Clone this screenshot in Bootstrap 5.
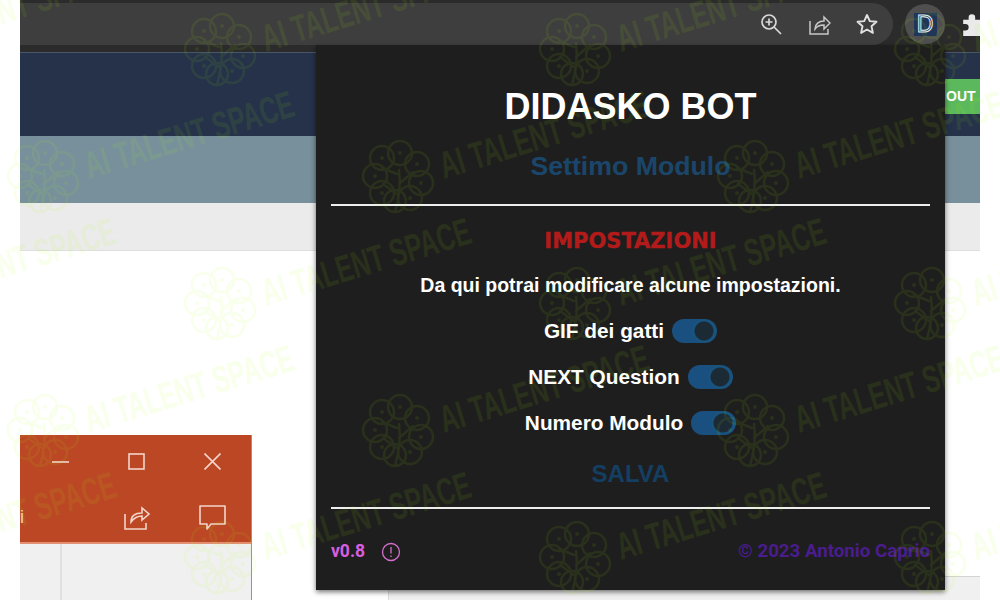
<!DOCTYPE html>
<html lang="en">
<head>
    <meta charset="UTF-8">
    <title>Didasko Bot</title>
    <link href="https://cdn.jsdelivr.net/npm/bootstrap@5.3.0/dist/css/bootstrap.min.css" rel="stylesheet">
    <style>
        html, body { height: 600px; overflow: hidden; background: #fff; }
        body { font-family: "Liberation Sans", Arial, sans-serif; }
        .stage { width: 1000px; height: 600px; padding: 0 20px; }
        .browser { height: 600px; }

        .tool-strip { height: 52px; background: #2b2b2b; padding: 3px 0 7px; overflow: hidden; }
        .addr-bar { width: 873px; height: 42px; background: #3e3e3e; border-radius: 0 21px 21px 0; padding-right: 14px; gap: 24px; flex-shrink: 0; }
        .addr-bar svg { width: 24px; height: 24px; }
        .ext-btn { width: 40px; height: 40px; border-radius: 50%; background: #4f4f4f; margin-left: 12px; flex-shrink: 0; }
        .ext-logo { width: 23px; height: 23px; background: #1f3658; }
        .ext-logo span { color: #1f3658; -webkit-text-stroke: 1px #e6edf5; font-size: 23px; font-weight: 400; line-height: 23px; }
        .puzzle { margin-left: 16px; flex-shrink: 0; }

        .site-head { height: 84px; background: #25324a; padding-top: 26px; border-top: 1px solid #4a5568; }
        .out-tag { width: 35px; height: 35px; background: #5cb85c; color: #fff; font-size: 14px; font-weight: 700; line-height: 35px; padding-left: 1px; overflow: hidden; }
        .site-band { height: 67px; background: #78909c; }
        .site-sub { height: 48px; background: #ebebeb; border-bottom: 1px solid #dedede; }
        .site-body { height: 349px; }
        .site-body-fill { height: 325px; }
        .site-foot { height: 24px; }
        .foot-blank { width: 368px; }
        .foot-grey { background: #f0f0f0; border-top: 1px solid #d4d4d4; border-left: 1px solid #ddd; }

        .office-win { position: absolute; left: 20px; top: 435px; width: 232px; height: 165px; background: #f0f0f0; border-right: 1px solid #dc7a5c; }
        .office-title { height: 109px; background: #bb4725; border-bottom: 2px solid #e28f72; }
        .office-row { height: 54px; }
        .office-row-a { gap: 59px; padding-right: 30px; }
        .office-row-b { gap: 48px; padding-right: 25px; padding-top: 4px; }
        .office-i { color: #f2cfc2; font-size: 18px; margin-right: auto; }
        .office-cols { width: 42px; height: 56px; border-right: 2px solid #e0e0e0; }

        .popup { position: absolute; left: 316px; top: 45px; width: 629px; height: 545px; background: #1e1e1e; color: #fff; padding: 0 15px; box-shadow: 0 2px 5px rgba(0,0,0,.55); }
        .popup h1 { font-size: 36px; font-weight: 700; line-height: 40px; margin: 42px 0 0; }
        .popup h2 { font-size: 26.7px; font-weight: 700; line-height: 30px; margin: 24px 0 0; color: #1b466b; }
        .rule-line { height: 2px; background: #eee; margin: 23px 0 0; opacity: 1; border: 0; }
        .popup h3 { font-family: "DejaVu Sans", sans-serif; font-size: 21px; font-weight: 700; line-height: 24px; margin: 23px 0 0; color: #b31b1b; -webkit-text-stroke: .4px #b31b1b; }
        .intro-txt { font-size: 19.5px; font-weight: 700; line-height: 24px; margin: 20px 0 0; }
        .opt-row { height: 46px; gap: 8px; font-size: 20.8px; font-weight: 700; }
        .opt-first { margin-top: 11px; }
        .opt-row .form-check-input { width: 45px; height: 24px; margin: 0; float: none; border-radius: 12px; background-color: #1a5080; border: 0; box-shadow: none; background-image: radial-gradient(circle at 32px 12px, #1c2a36 0 9px, #17557f 10px 11px, transparent 12px); }
        .save-txt { font-size: 24px; font-weight: 700; line-height: 28px; margin: 14px 0 0; color: #143f63; }
        .rule-b { margin-top: 19px; }
        .foot-row { margin-top: 25px; height: 35px; }
        .ver-txt { font-family: "Roboto", "Liberation Sans", sans-serif; font-size: 17.5px; font-weight: 700; color: #d75ee0; }
        .copy-txt { font-family: "Roboto", "Liberation Sans", sans-serif; font-size: 18.7px; font-weight: 700; color: #4a1c8e; }

        .mark-layer { position: absolute; left: 0; top: 0; width: 1000px; height: 600px; pointer-events: none; }
        .mark-layer text { font-family: "Liberation Sans Narrow", "Liberation Sans", sans-serif; font-size: 38px; font-weight: 700; fill: #aaff00; stroke: none; }
        .mark-lines { fill: none; stroke: #aaff00; stroke-width: 2.5; stroke-linecap: round; stroke-linejoin: round; }
        .mark-dots { fill: #aaff00; }
    </style>
</head>
<body>
    <div class="stage">
        <div class="browser d-flex flex-column">
            <div class="tool-strip d-flex align-items-center">
                <div class="addr-bar d-flex align-items-center justify-content-end">
                    <svg viewBox="0 0 24 24" fill="none" stroke="#d8d8d8" stroke-width="1.7"><circle cx="10" cy="10" r="7"/><path d="M15 15l7 7M10 6.500v7M6.500 10h7"/></svg>
                    <svg viewBox="0 0 24 24" fill="none" stroke="#c8c8c8" stroke-width="1.500"><path d="M3 9v13h18v-5M8 17c0-5 4-8 9-8V5l6 6-6 6v-4c-4 0-7 1-9 4z"/></svg>
                    <svg viewBox="0 0 24 24" fill="none" stroke="#e0e0e0" stroke-width="1.900" stroke-linejoin="round"><path d="M12 3l2.800 6.100 6.700.7-5 4.500 1.400 6.600L12 17.500l-5.900 3.400 1.400-6.600-5-4.500 6.700-.7z"/></svg>
                </div>
                <div class="ext-btn d-flex align-items-center justify-content-center">
                    <div class="ext-logo text-center"><span>D</span></div>
                </div>
                <svg class="puzzle" width="24" height="24" viewBox="0 0 22 22" fill="#eaeaea"><path d="M2 7h5V5a3 3 0 0 1 6 0v2h5v5h2a3 3 0 0 1 0 6h-2v4H2v-5h2a3 3 0 0 0 0-6H2z"/></svg>
            </div>
            <div class="site-head d-flex justify-content-end">
                <div class="out-tag">OUT</div>
            </div>
            <div class="site-band"></div>
            <div class="site-sub"></div>
            <div class="site-body d-flex flex-column">
                <div class="site-body-fill"></div>
                <div class="site-foot d-flex">
                    <div class="foot-blank"></div>
                    <div class="foot-grey flex-grow-1"></div>
                </div>
            </div>
        </div>
    </div>

    <div class="office-win">
        <div class="office-title d-flex flex-column">
            <div class="office-row office-row-a d-flex align-items-center justify-content-end">
                <svg width="17" height="17" viewBox="0 0 17 17" fill="none" stroke="#f3d5c9" stroke-width="1.600"><path d="M0 9h17"/></svg>
                <svg width="17" height="17" viewBox="0 0 17 17" fill="none" stroke="#f3d5c9" stroke-width="1.600"><rect x="1" y="1" width="15" height="15"/></svg>
                <svg width="17" height="17" viewBox="0 0 17 17" fill="none" stroke="#f3d5c9" stroke-width="1.600"><path d="M.5.5l16 16M16.500.5l-16 16"/></svg>
            </div>
            <div class="office-row office-row-b d-flex align-items-center justify-content-end">
                <span class="office-i">i</span>
                <svg width="28" height="25" viewBox="0 0 28 25" fill="none" stroke="#f3d5c9" stroke-width="1.600"><path d="M2 9v15h21v-6M8 17c0-6 4-9 11-9V3l7 6-7 6v-4c-5 0-8 2-11 6z"/></svg>
                <svg width="27" height="25" viewBox="0 0 27 25" fill="none" stroke="#f3d5c9" stroke-width="1.600" stroke-linejoin="round"><path d="M1 1h25v18H12l-4 5v-5H1z"/></svg>
            </div>
        </div>
        <div class="office-cols"></div>
    </div>

    <div class="popup d-flex flex-column">
        <h1 class="text-center">DIDASKO BOT</h1>
        <h2 class="text-center">Settimo Modulo</h2>
        <hr class="rule-line">
        <h3 class="text-center">IMPOSTAZIONI</h3>
        <p class="intro-txt text-center">Da qui potrai modificare alcune impostazioni.</p>
        <div class="opt-row opt-first d-flex align-items-center justify-content-center">
            <span>GIF dei gatti</span>
            <input class="form-check-input" type="checkbox" role="switch" checked>
        </div>
        <div class="opt-row d-flex align-items-center justify-content-center">
            <span>NEXT Question</span>
            <input class="form-check-input" type="checkbox" role="switch" checked>
        </div>
        <div class="opt-row d-flex align-items-center justify-content-center">
            <span>Numero Modulo</span>
            <input class="form-check-input" type="checkbox" role="switch" checked>
        </div>
        <p class="save-txt text-center">SALVA</p>
        <hr class="rule-line rule-b">
        <div class="foot-row d-flex align-items-center justify-content-between">
            <div class="d-flex align-items-center gap-3">
                <span class="ver-txt">v0.8</span>
                <svg width="20" height="20" viewBox="0 0 20 20" fill="none" stroke="#d46fcf" stroke-width="1.300"><circle cx="10" cy="10" r="8.500"/><path d="M10 5v6.500M10 13.500v1.500"/></svg>
            </div>
            <span class="copy-txt">© 2023 Antonio Caprio</span>
        </div>
    </div>

    <svg class="mark-layer" viewBox="0 0 1000 600" opacity="0.08">
        <defs>
            <g id="wmark">
                <g class="mark-lines">
                    <circle cx="2" cy="-23" r="12"/><circle cx="-16" cy="-18" r="12"/><circle cx="19" cy="-12" r="12"/>
                    <circle cx="-23" cy="0" r="12"/><circle cx="23" cy="7" r="12"/><circle cx="-16" cy="17" r="12"/>
                    <circle cx="12" cy="22" r="12"/><circle cx="-3" cy="25" r="11"/>
                    <path d="M-3 36C1 22 3 8 1-6M1 8l14-12M-1 18l-14-10M-16-8l15 6"/>
                </g>
                <g class="mark-dots">
                    <circle cx="-16" cy="-18" r="2"/><circle cx="-23" cy="0" r="2"/><circle cx="-16" cy="17" r="2"/>
                    <circle cx="2" cy="-23" r="2"/><circle cx="19" cy="-12" r="2"/><circle cx="23" cy="7" r="2"/>
                    <circle cx="12" cy="22" r="2"/>
                </g>
                <text transform="translate(46 3) rotate(-17)" textLength="217" lengthAdjust="spacingAndGlyphs">AI TALENT SPACE</text>
            </g>
        </defs>
        <use href="#wmark" x="-135" y="49"/><use href="#wmark" x="220" y="49"/><use href="#wmark" x="575" y="49"/><use href="#wmark" x="930" y="49"/>
        <use href="#wmark" x="43" y="176"/><use href="#wmark" x="398" y="176"/><use href="#wmark" x="753" y="176"/>
        <use href="#wmark" x="-135" y="303"/><use href="#wmark" x="220" y="303"/><use href="#wmark" x="575" y="303"/><use href="#wmark" x="930" y="303"/>
        <use href="#wmark" x="43" y="430"/><use href="#wmark" x="398" y="430"/><use href="#wmark" x="753" y="430"/>
        <use href="#wmark" x="-135" y="557"/><use href="#wmark" x="220" y="557"/><use href="#wmark" x="575" y="557"/><use href="#wmark" x="930" y="557"/>
    </svg>

    <script src="https://cdn.jsdelivr.net/npm/bootstrap@5.3.0/dist/js/bootstrap.bundle.min.js"></script>
</body>
</html>
